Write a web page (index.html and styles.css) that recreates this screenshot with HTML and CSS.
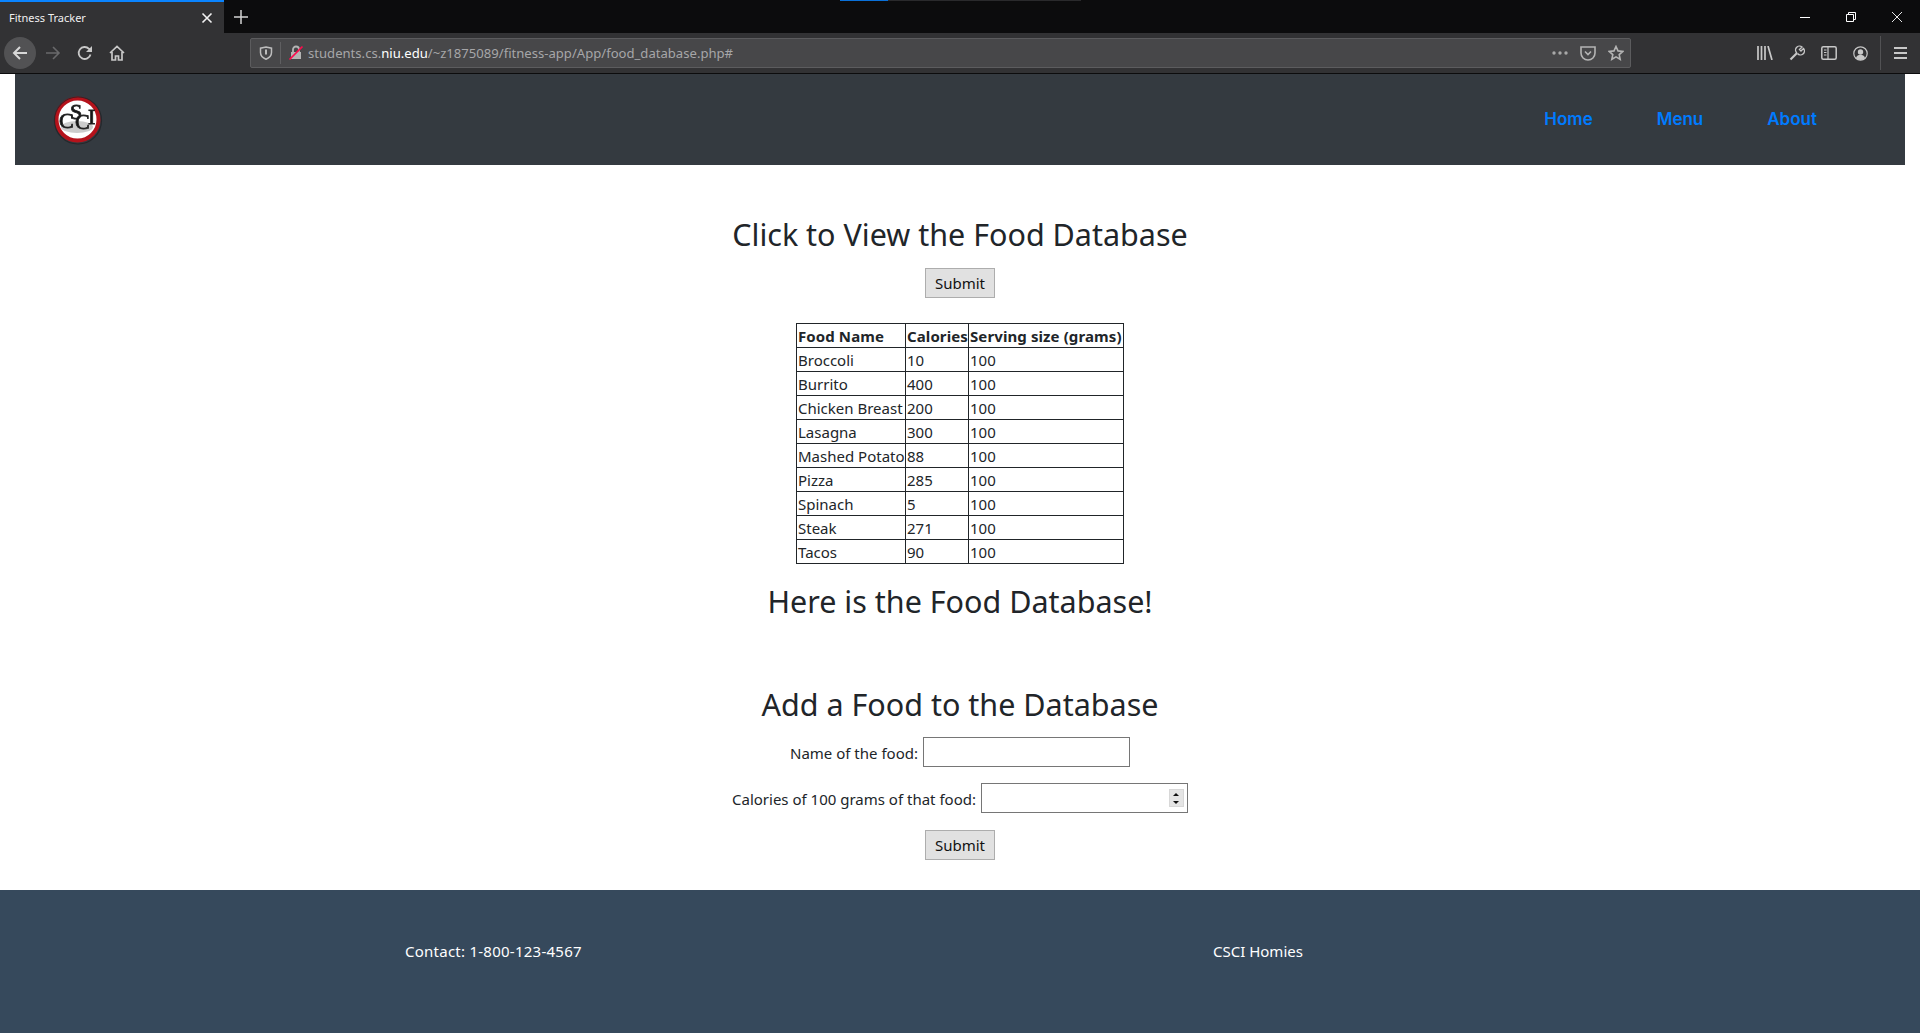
FILE: index.html
```html
<!DOCTYPE html>
<html lang="en">
<head>
    <meta charset="UTF-8">
    <meta name="viewport" content="width=device-width, initial-scale=1.0">
    <title>Fitness Tracker</title>
    <link rel="stylesheet" href="styles.css">
</head>
<body>

    <div class="tabstrip">
        <div class="tab">
            <span class="tab-title">Fitness Tracker</span>
            <svg class="tab-close" width="12" height="12" viewBox="0 0 12 12"><path d="M1.5 1.5l9 9M10.5 1.5l-9 9" stroke="#f2f2f2" stroke-width="1.6" fill="none"/></svg>
        </div>
        <svg class="new-tab" width="14" height="14" viewBox="0 0 14 14"><path d="M7 0v14M0 7h14" stroke="#d4d4d4" stroke-width="1.5" fill="none"/></svg>
        <div class="tab-progress"><div class="tab-progress-fill"></div></div>
        <div class="window-buttons">
            <svg width="10" height="10" viewBox="0 0 10 10"><path d="M0 5.5h10" stroke="#fff" fill="none"/></svg>
            <svg width="10" height="10" viewBox="0 0 10 10"><path d="M.5 2.5h7v7h-7zM2.5 2.5v-2h7v7h-2" stroke="#fff" fill="none"/></svg>
            <svg width="10" height="10" viewBox="0 0 10 10"><path d="M0 0l10 10M10 0L0 10" stroke="#fff" stroke-width=".9" fill="none"/></svg>
        </div>
    </div>

    <div class="toolbar">
        <div class="back-btn">
            <svg width="16" height="16" viewBox="0 0 16 16"><path d="M15 8H2M8 2L2 8l6 6" stroke="#d8d8d8" stroke-width="2" fill="none"/></svg>
        </div>
        <svg class="tool-icon forward" width="16" height="16" viewBox="0 0 16 16"><path d="M1 8h13M8 2l6 6-6 6" stroke="#69696b" stroke-width="1.6" fill="none"/></svg>
        <svg class="tool-icon" width="16" height="16" viewBox="0 0 16 16"><path d="M13.5 9.5A6 6 0 1 1 12 3.8L14 5.5" stroke="#c8c8c8" stroke-width="1.8" fill="none"/><path d="M15 1v6H9z" fill="#c8c8c8"/></svg>
        <svg class="tool-icon" width="16" height="16" viewBox="0 0 16 16"><path d="M1 8l7-6.5L15 8M3 7v8h3.5v-4h3v4H13V7" stroke="#c8c8c8" stroke-width="1.7" fill="none"/></svg>

        <div class="urlbar">
            <svg class="shield" width="14" height="14" viewBox="0 0 14 14"><path d="M7 1l5.500 1.200v4.300C12.500 10 10 12 7 13.200 4 12 1.500 10 1.500 6.500V2.200z" stroke="#bdbdbd" stroke-width="1.5" fill="none"/><path d="M6 3.500h2v5H6z" fill="#bdbdbd"/></svg>
            <span class="url-divider"></span>
            <svg class="lock" width="16" height="16" viewBox="0 0 16 16"><path d="M3 7h10v7H3z" fill="#b4b4b4"/><path d="M5 7V4.500a3 3 0 0 1 6 0V7" stroke="#b4b4b4" stroke-width="1.8" fill="none"/><path d="M1.500 14.500L14.500 1.500" stroke="#ff0a4d" stroke-width="1.7"/></svg>
            <span class="url-text">students.cs.<b>niu.edu</b>/~z1875089/fitness-app/App/food_database.php#</span>
            <svg class="url-icon" width="16" height="4" viewBox="0 0 16 4"><circle cx="2" cy="2" r="1.7" fill="#a8a8a8"/><circle cx="8" cy="2" r="1.7" fill="#a8a8a8"/><circle cx="14" cy="2" r="1.7" fill="#a8a8a8"/></svg>
            <svg class="url-icon" width="16" height="15" viewBox="0 0 16 15"><path d="M1 1h14v6a7 7 0 0 1-14 0z" stroke="#b4b4b4" stroke-width="1.6" fill="none"/><path d="M5 5.500l3 3 3-3" stroke="#b4b4b4" stroke-width="1.6" fill="none"/></svg>
            <svg class="url-icon" width="16" height="16" viewBox="0 0 16 16"><path d="M8 1.500l2 4.400 4.800.5-3.600 3.200 1 4.700L8 11.900l-4.200 2.400 1-4.700L1.200 6.400 6 5.900z" stroke="#b4b4b4" stroke-width="1.6" fill="none"/></svg>
        </div>

        <div class="toolbar-right">
            <svg width="16" height="14" viewBox="0 0 16 14"><path d="M1 0v14M4.500 0v14M8 0v14M11 0l4 14" stroke="#c8c8c8" stroke-width="1.7" fill="none"/></svg>
            <svg width="16" height="16" viewBox="0 0 16 16"><path d="M1.500 14.500L8 8" stroke="#c8c8c8" stroke-width="2.2" fill="none"/><path d="M8 8a3.800 3.800 0 0 1 5-6l-2.500 2.500 1.500 1.500 2.500-2.500a3.800 3.800 0 0 1-6 5" stroke="#c8c8c8" stroke-width="1.4" fill="none"/></svg>
            <svg width="16" height="14" viewBox="0 0 16 14"><rect x=".8" y=".8" width="14.4" height="12.4" rx="1.5" stroke="#c8c8c8" stroke-width="1.5" fill="none"/><path d="M7 1v12M3 4h2.500M3 6.500h2.500M3 9h2.500" stroke="#c8c8c8" stroke-width="1.2" fill="none"/></svg>
            <svg width="15" height="15" viewBox="0 0 15 15"><circle cx="7.500" cy="7.500" r="6.700" stroke="#c8c8c8" stroke-width="1.2" fill="none"/><circle cx="7.500" cy="6" r="2.700" fill="#c8c8c8"/><path d="M3 12c.5-2.500 2.500-3.200 4.500-3.200s4 .7 4.500 3.200a6 6 0 0 1-9 0z" fill="#c8c8c8"/></svg>
            <span class="toolbar-divider"></span>
            <svg width="13" height="12" viewBox="0 0 13 12"><path d="M0 1h13M0 6h13M0 11h13" stroke="#c8c8c8" stroke-width="1.8" fill="none"/></svg>
        </div>
    </div>

    <div class="page">
        <nav class="navbar">
            <svg class="logo" width="50" height="50" viewBox="0 0 50 50">
                <circle cx="24.500" cy="24.500" r="21" fill="#fff" stroke="#b5121b" stroke-width="4"/>
                <circle cx="25" cy="25.500" r="23.500" fill="none" stroke="#1f1f22" stroke-width="1.2" opacity=".7"/>
                <ellipse cx="24" cy="32" rx="16" ry="6" fill="#aaa" opacity=".6"/>
                <text class="logo-text" x="6 17 22 35" y="33 24 34 29">CSCI</text>
            </svg>
            <ul class="nav-links">
                <li><a href="#">Home</a></li>
                <li><a href="#">Menu</a></li>
                <li><a href="#">About</a></li>
            </ul>
        </nav>

        <main class="content">
            <h2 class="view-title">Click to View the Food Database</h2>
            <button type="button" class="btn">Submit</button>

            <table class="food-table">
                <colgroup>
                    <col class="col-name">
                    <col class="col-cal">
                    <col class="col-size">
                </colgroup>
                <tr><th>Food Name</th><th>Calories</th><th>Serving size (grams)</th></tr>
                <tr><td>Broccoli</td><td>10</td><td>100</td></tr>
                <tr><td>Burrito</td><td>400</td><td>100</td></tr>
                <tr><td>Chicken Breast</td><td>200</td><td>100</td></tr>
                <tr><td>Lasagna</td><td>300</td><td>100</td></tr>
                <tr><td>Mashed Potato</td><td>88</td><td>100</td></tr>
                <tr><td>Pizza</td><td>285</td><td>100</td></tr>
                <tr><td>Spinach</td><td>5</td><td>100</td></tr>
                <tr><td>Steak</td><td>271</td><td>100</td></tr>
                <tr><td>Tacos</td><td>90</td><td>100</td></tr>
            </table>

            <h2 class="here-title">Here is the Food Database!</h2>
            <h2 class="add-title">Add a Food to the Database</h2>

            <form class="food-form">
                <div class="field">
                    <label for="food">Name of the food:</label>
                    <input type="text" id="food">
                </div>
                <div class="field">
                    <label for="calories">Calories of 100 grams of that food:</label>
                    <div class="number-input">
                        <div class="spinner">
                            <span class="arrow-up"></span>
                            <span class="arrow-down"></span>
                        </div>
                        <input type="text" id="calories">
                    </div>
                </div>
                <button type="button" class="btn">Submit</button>
            </form>
        </main>

        <footer class="footer">
            <span class="contact">Contact: 1-800-123-4567</span>
            <span class="homies">CSCI Homies</span>
        </footer>
    </div>

</body>
</html>
```

FILE: styles.css
```css
* {
    box-sizing: border-box;
}
html, body {
    margin: 0;
    height: 1033px;
    overflow: hidden;
}
body {
    font-family: "Noto Sans", "Open Sans", sans-serif;
    font-size: 15px;
    color: #212529;
    background: #fff;
    display: flex;
    flex-direction: column;
}

/* browser chrome */
.tabstrip {
    height: 33px;
    background: #0c0c0d;
    display: flex;
    align-items: center;
    position: relative;
}
.tab {
    width: 224px;
    height: 33px;
    background: #323234;
    border-top: 2px solid #0a84ff;
    display: flex;
    align-items: center;
    justify-content: space-between;
    padding: 0 11px 0 9px;
}
.tab-title {
    color: #f0f0f0;
    font-size: 11px;
}
.new-tab {
    margin-left: 10px;
}
.tab-progress {
    position: absolute;
    left: 840px;
    top: 0;
    width: 241px;
    height: 1px;
    background: #2a2a2c;
}
.tab-progress-fill {
    width: 48px;
    height: 1px;
    background: #0a70d8;
}
.window-buttons {
    margin-left: auto;
    display: flex;
    gap: 36px;
    padding-right: 18px;
}
.toolbar {
    height: 41px;
    background: #323234;
    border-bottom: 1px solid #0c0c0d;
    display: flex;
    align-items: center;
    padding-left: 4px;
}
.back-btn {
    width: 32px;
    height: 32px;
    border-radius: 50%;
    background: #525254;
    display: flex;
    align-items: center;
    justify-content: center;
    margin-right: 9px;
}
.tool-icon {
    margin-right: 16px;
}
.urlbar {
    margin-left: 109px;
    width: 1381px;
    height: 30px;
    background: #474749;
    border: 1px solid #5c5c5e;
    border-radius: 2px;
    display: flex;
    align-items: center;
    padding: 0 6px 0 8px;
}
.shield {
    margin-right: 7px;
}
.url-divider {
    width: 1px;
    height: 22px;
    background: #5f5f61;
    margin-right: 7px;
}
.lock {
    margin-right: 4px;
}
.url-text {
    color: #a6a6a8;
    font-size: 13.1px;
    flex: 1;
}
.url-text b {
    color: #fff;
    font-weight: 400;
}
.url-icon {
    margin-left: 12px;
}
.toolbar-right {
    margin-left: auto;
    display: flex;
    align-items: center;
    gap: 16px;
    padding-right: 13px;
}
.toolbar-divider {
    width: 1px;
    height: 34px;
    background: #525254;
    margin: 0 -3px 0 -4px;
}

/* page */
.page {
    flex: 1;
    display: flex;
    flex-direction: column;
}
.navbar {
    margin: 0 15px;
    height: 91px;
    background: #343a40;
    display: flex;
    align-items: center;
    justify-content: space-between;
    padding: 0 88px 0 38px;
}
.logo {
    filter: blur(.5px);
}
.logo-text {
    font-family: "Liberation Serif", serif;
    font-size: 22px;
    fill: #151515;
    stroke: #222;
    stroke-width: .8;
}
.nav-links {
    list-style: none;
    margin: 0 0 2px;
    padding: 0;
    display: flex;
    gap: 64px;
}
.nav-links a {
    color: #007bff;
    text-decoration: none;
    font-family: Inter, sans-serif;
    font-size: 17px;
    font-weight: 600;
    letter-spacing: 0;
}
.content {
    flex: 1;
    display: flex;
    flex-direction: column;
    align-items: center;
}
h2 {
    font-size: 30.5px;
    font-weight: 400;
    line-height: 38px;
    margin: 0;
}
.view-title {
    margin-top: 50px;
    margin-bottom: 15px;
}
.btn {
    width: 70px;
    height: 30px;
    padding: 0;
    font-family: inherit;
    font-size: 15px;
    color: #111;
    background: #e1e1e1;
    border: 1px solid #adadad;
}
.food-table {
    margin-top: 25px;
    width: 328px;
    table-layout: fixed;
    border-collapse: collapse;
    border: 1px solid #212529;
}
.col-name {
    width: 109px;
}
.col-cal {
    width: 63px;
}
.food-table th, .food-table td {
    height: 24px;
    padding: 1px 1px 0;
    border: 1px solid #212529;
    text-align: left;
    line-height: 22px;
    white-space: nowrap;
    overflow: hidden;
}
.food-table th {
    letter-spacing: .1px;
}
.here-title {
    margin-top: 18px;
}
.add-title {
    margin-top: 65px;
}
.food-form {
    display: flex;
    flex-direction: column;
    align-items: center;
    margin-top: 14px;
}
.field {
    display: flex;
    align-items: center;
    gap: 5px;
    margin-bottom: 16px;
}
.field label {
    margin-top: 2px;
}
.field input {
    width: 207px;
    height: 30px;
    border: 1px solid #767676;
    background: #fff;
    padding: 0 2px;
    font-family: inherit;
    display: block;
}
.number-input {
    position: relative;
}
.spinner {
    position: absolute;
    top: 6px;
    right: 4px;
    width: 15px;
    height: 18px;
    background: #e5e5e5;
    border: 1px solid #d8d8d8;
    display: flex;
    flex-direction: column;
    align-items: center;
    justify-content: space-around;
}
.arrow-up {
    border: 3px solid transparent;
    border-top: 0;
    border-bottom: 3px solid #111;
}
.arrow-down {
    border: 3px solid transparent;
    border-bottom: 0;
    border-top: 3px solid #111;
}
.food-form .btn {
    margin-top: 1px;
}
.footer {
    height: 143px;
    background: #36495c;
    color: #fff;
    display: grid;
    grid-template-columns: 808px 1fr;
    padding: 50px 0 0 405px;
    line-height: 22px;
}
.contact {
    letter-spacing: .25px;
}
```
